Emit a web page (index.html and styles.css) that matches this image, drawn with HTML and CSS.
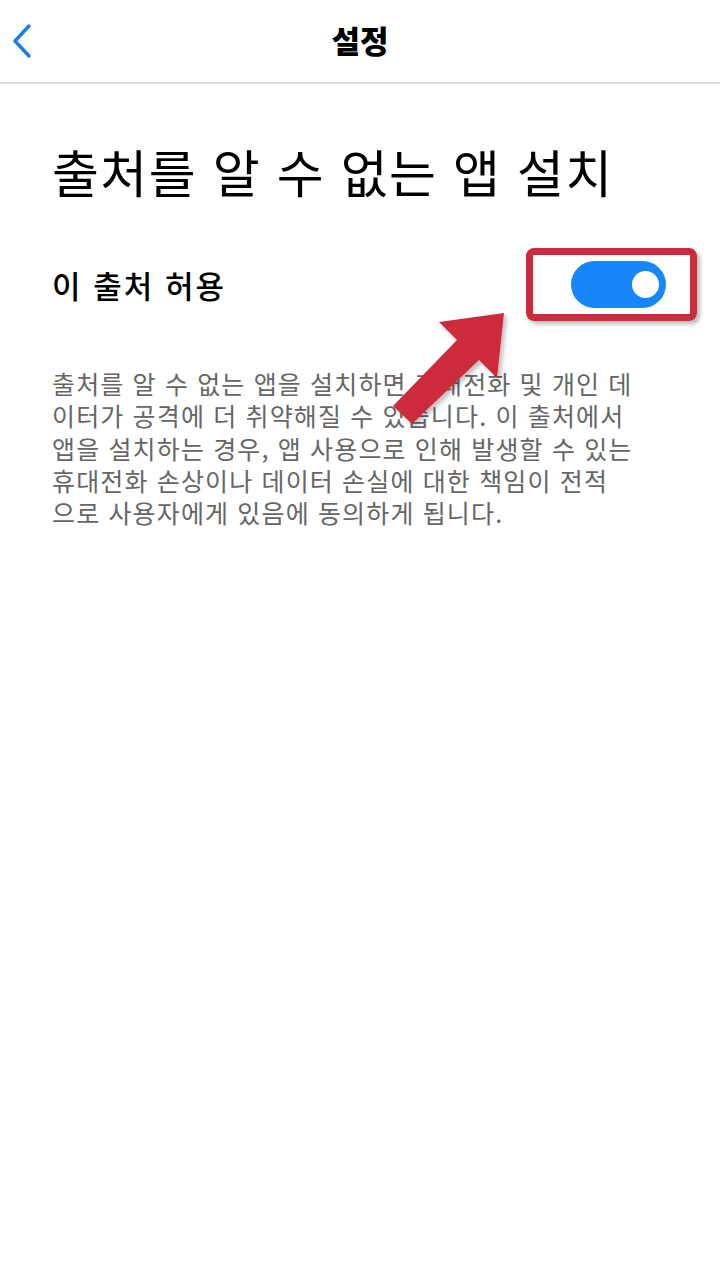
FILE: index.html
```html
<!DOCTYPE html>
<html lang="ko">
<head>
<meta charset="utf-8">
<title>설정</title>
<link rel="stylesheet" href="styles.css">
</head>
<body>
<div class="page">
  <header class="topbar">
    <button class="back" aria-label="뒤로">
      <svg width="22" height="36" viewBox="0 0 22 36"><path d="M18 3 L4 18 L18 33" fill="none" stroke="#1a7fe3" stroke-width="3.4" stroke-linecap="round" stroke-linejoin="round"/></svg>
    </button>
    <h1 class="title">설정</h1>
  </header>
  <main class="content">
    <h2 class="heading">출처를 알 수 없는 앱 설치</h2>
    <div class="row">
      <span class="row-label">이 출처 허용</span>
      <div class="highlight">
        <span class="switch"><span class="knob"></span></span>
      </div>
    </div>
    <p class="desc">출처를 알 수 없는 앱을 설치하면 휴대전화 및 개인 데<br>이터가 공격에 더 취약해질 수 있습니다. 이 출처에서<br>앱을 설치하는 경우, 앱 사용으로 인해 발생할 수 있는<br>휴대전화 손상이나 데이터 손실에 대한 책임이 전적<br>으로 사용자에게 있음에 동의하게 됩니다.</p>
  </main>
  <svg class="arrow" width="720" height="1280" viewBox="0 0 720 1280">
    <defs>
      <filter id="sh" x="-20%" y="-20%" width="140%" height="140%">
        <feDropShadow dx="3" dy="3" stdDeviation="2" flood-color="#000" flood-opacity="0.25"/>
      </filter>
    </defs>
    <polygon points="504,313 439,322 457,340 393,406 412,424 479,360 497,378" fill="#cd2b3b" filter="url(#sh)"/>
  </svg>
</div>
</body>
</html>
```
FILE: styles.css
```css
* { box-sizing: border-box; }
html, body { margin: 0; padding: 0; background: #fff; }
body {
  font-family: "Noto Sans CJK KR", "Noto Sans", sans-serif;
  color: #000;
}
.page { position: relative; width: 720px; height: 1280px; overflow: hidden; }
.topbar {
  height: 84px;
  border-bottom: 2px solid #dcdcdc;
  display: flex;
  align-items: center;
  justify-content: center;
  position: relative;
}
.back {
  position: absolute;
  left: 11px;
  top: 23px;
  border: 0;
  background: none;
  padding: 0;
  width: 22px;
  height: 36px;
}
.back svg { display: block; }
.title {
  margin: 0;
  font-size: 31px;
  font-weight: 900;
  line-height: 40px;
  margin-top: -2px;
}
.content { padding: 0 52px; }
.heading {
  margin: 57px 0 0;
  font-size: 51px;
  font-weight: 400;
  line-height: 60px;
  letter-spacing: 1.4px;
  white-space: nowrap;
}
.row {
  margin-top: 47px;
  display: flex;
  align-items: center;
  justify-content: space-between;
  margin-right: -29px;
  height: 72px;
}
.row-label {
  font-size: 31px;
  font-weight: 500;
  letter-spacing: 2px;
}
.highlight {
  width: 171px;
  height: 73px;
  border: 7px solid #cd2b3b;
  border-radius: 8px;
  box-shadow: 3px 3px 4px rgba(0,0,0,0.28);
  display: flex;
  align-items: center;
  justify-content: flex-end;
  padding-right: 24px;
}
.switch {
  width: 95px;
  height: 47px;
  border-radius: 24px;
  background: #1686f8;
  display: flex;
  align-items: center;
  justify-content: flex-end;
  padding-right: 7px;
}
.knob {
  width: 27px;
  height: 27px;
  border-radius: 50%;
  background: #fff;
}
.desc {
  margin: 47px 0 0;
  font-size: 25px;
  line-height: 32.3px;
  letter-spacing: 1.15px;
  color: #666;
  white-space: nowrap;
}
.arrow { position: absolute; left: 0; top: 0; pointer-events: none; }
```
